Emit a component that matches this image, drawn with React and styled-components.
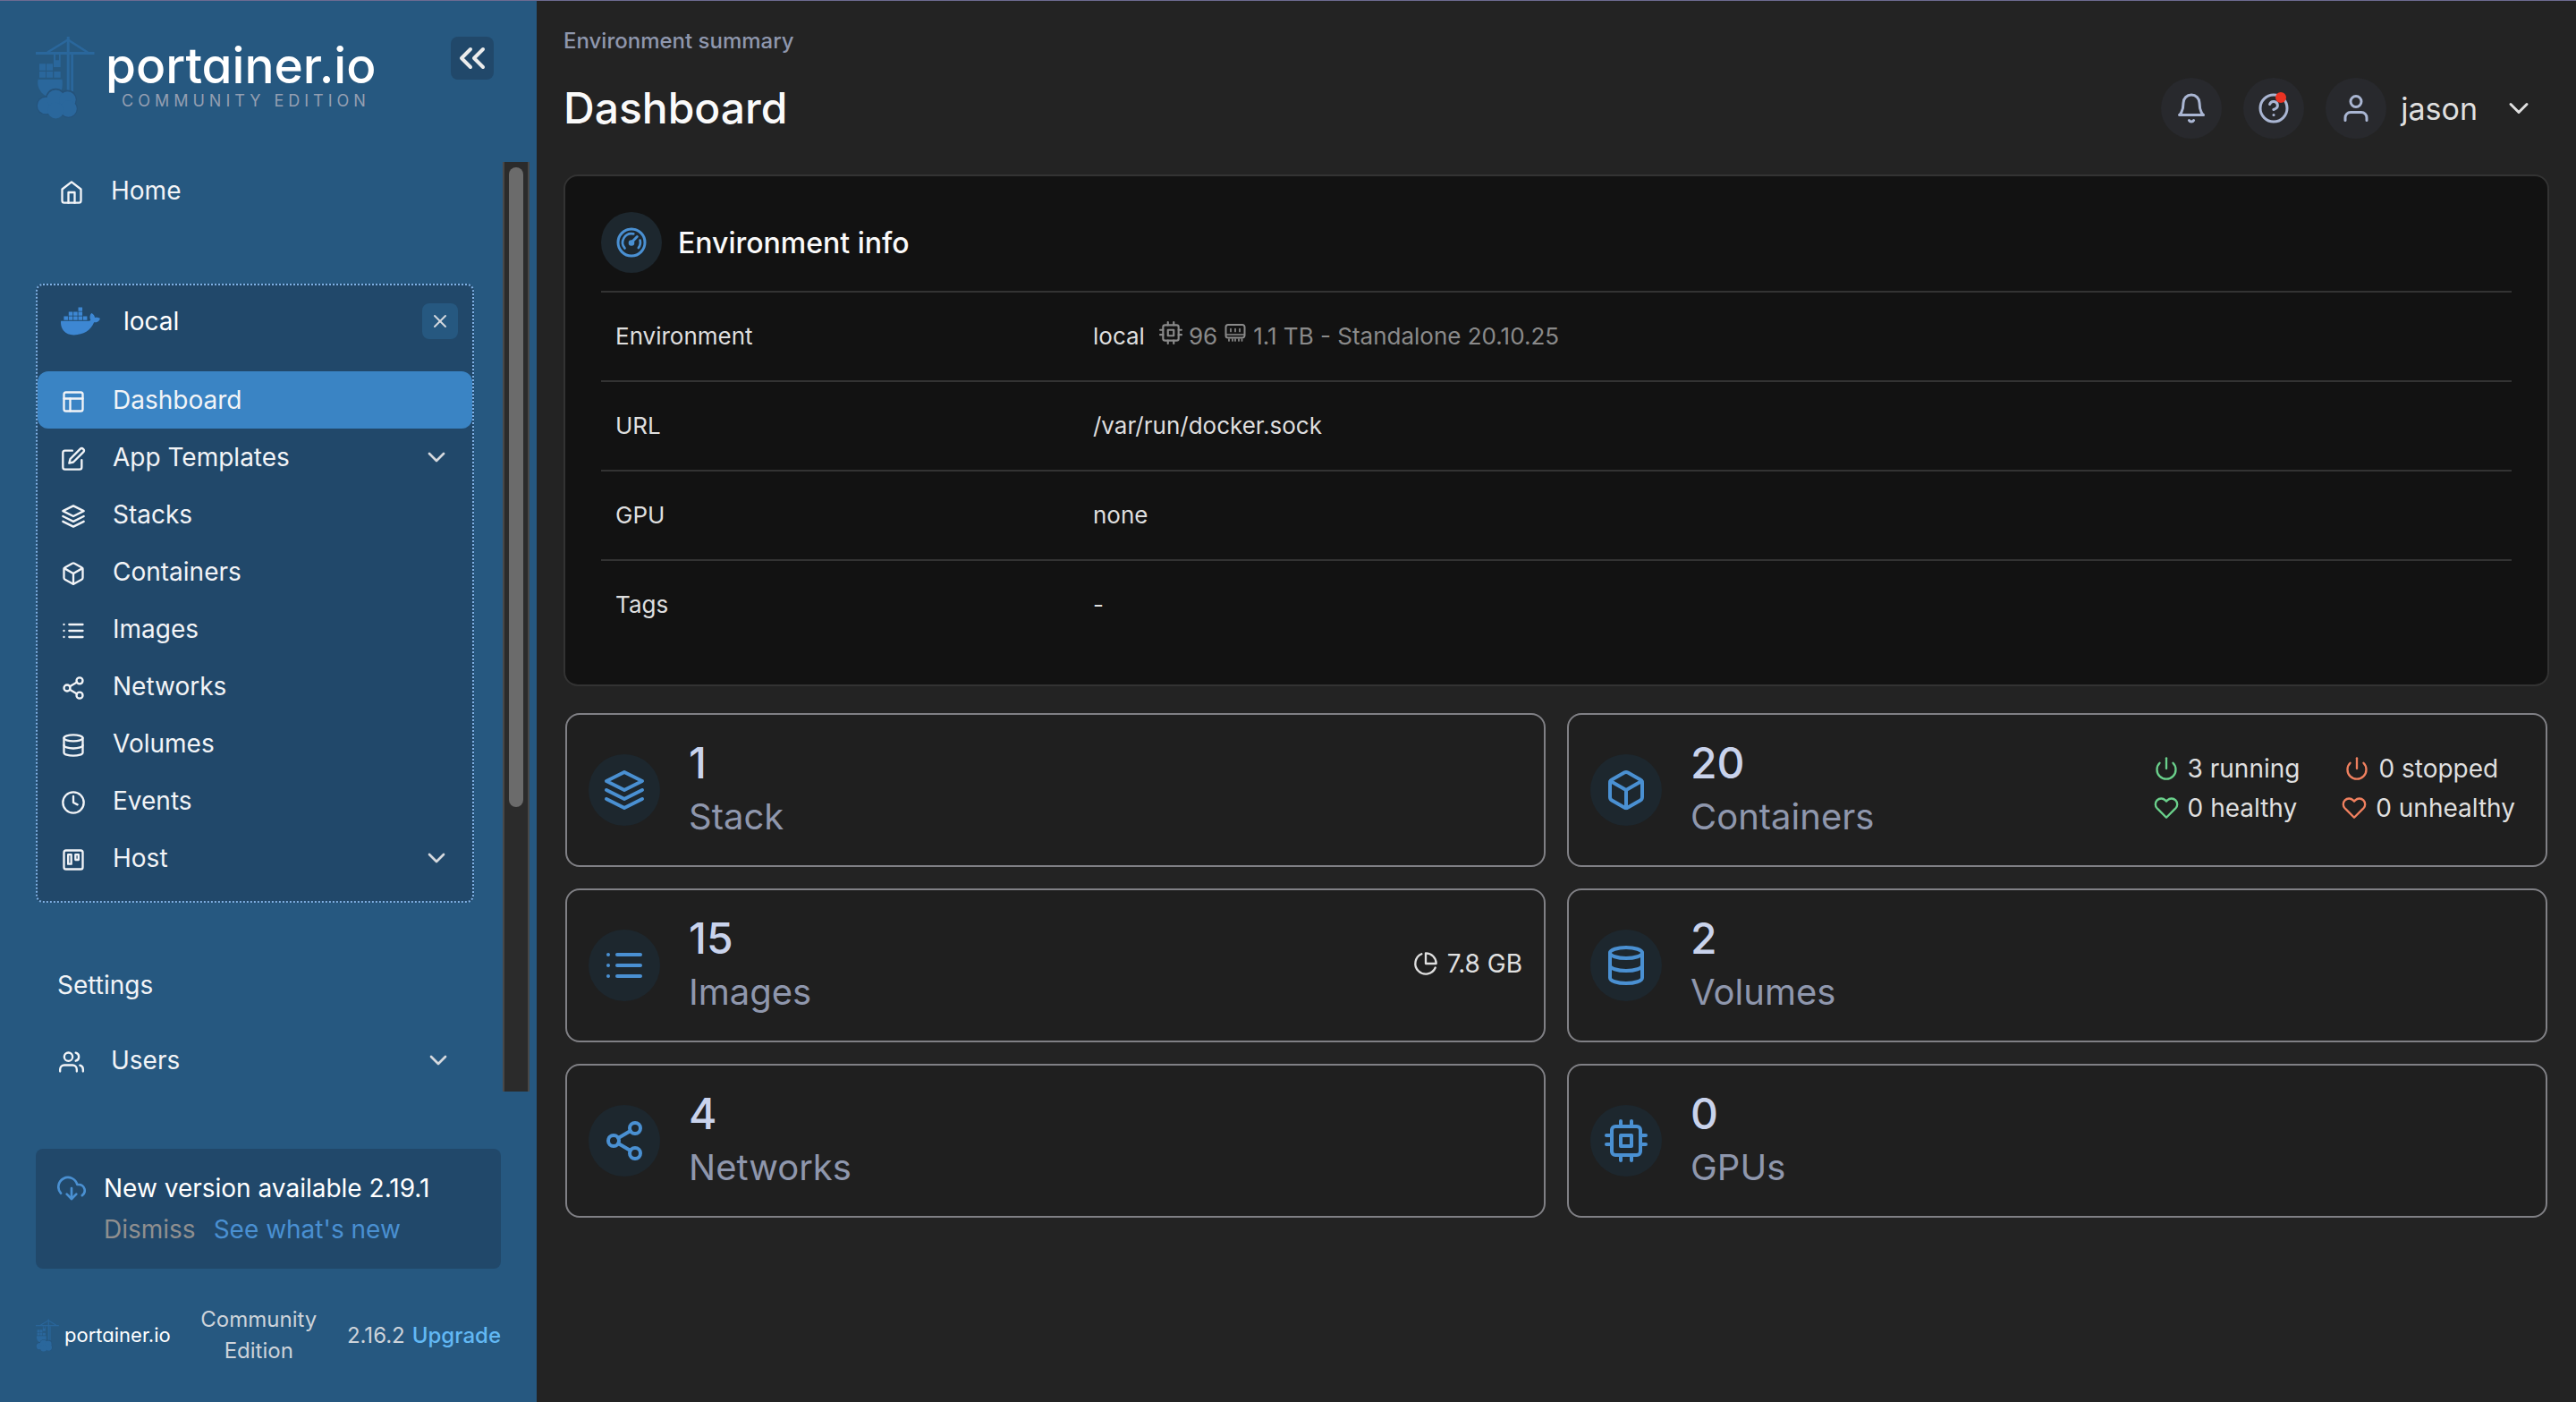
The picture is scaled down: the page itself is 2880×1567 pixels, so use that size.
import React from "react";
import styled, { createGlobalStyle } from "styled-components";
import {
  FiBell, FiBox, FiChevronDown, FiChevronsLeft, FiClock, FiCpu, FiDatabase,
  FiDownloadCloud, FiEdit, FiHeart, FiHelpCircle, FiHome, FiLayers, FiLayout,
  FiList, FiPieChart, FiPower, FiShare2, FiTrello, FiUser, FiUsers, FiX,
} from "react-icons/fi";
import { FaDocker } from "react-icons/fa";

const color = {
  sidebar: "#265880",
  sidebarDeep: "#21486a",
  active: "#3a84c4",
  accent: "#4a90d2",
  badge: "#1d272e",
  page: "#232323",
  card: "#121212",
  tile: "#1f1f1f",
  line: "#333333",
  muted: "#8f97ad",
  text: "#dfdfdf",
};

const GlobalStyle = createGlobalStyle`
  *, *::before, *::after { box-sizing: border-box; }
  body {
    margin: 0;
    background: ${color.page};
    color: ${color.text};
    font-family: Inter, "Liberation Sans", sans-serif;
    font-size: 28px;
  }
  button { border: 0; padding: 0; background: none; color: inherit; font: inherit; cursor: pointer; }
  a { color: inherit; text-decoration: none; }
  ul { list-style: none; margin: 0; padding: 0; }
  svg { display: block; flex: none; }
`;

const Shell = styled.div`
  display: flex;
  min-height: 100vh;
  border-top: 1px solid #6d6b92;
`;

/* ---------- sidebar ---------- */

const Sidebar = styled.aside`
  display: flex;
  flex-direction: column;
  flex: none;
  width: 600px;
  height: calc(100vh - 1px);
  background: ${color.sidebar};
`;

const SidebarHeader = styled.header`
  display: flex;
  justify-content: space-between;
  align-items: flex-start;
  padding: 40px 48px 48px 40px;
`;

const Brand = styled.a`
  display: flex;
  align-items: ${(p) => (p.$small ? "center" : "flex-start")};
  gap: ${(p) => (p.$small ? 6 : 12)}px;
  color: #ffffff;
`;

const BrandText = styled.span`
  display: flex;
  flex-direction: column;
  padding-top: 2px;
`;

const BrandName = styled.span`
  font-size: ${(p) => (p.$small ? 22 : 55)}px;
  line-height: ${(p) => (p.$small ? 32 : 60)}px;
  font-weight: ${(p) => (p.$small ? 400 : 500)};
  font-feature-settings: "cv11";
`;

const BrandEdition = styled.span`
  padding-left: 18px;
  font-size: 18px;
  line-height: 20px;
  letter-spacing: 5px;
  color: #949fb2;
`;

const CollapseButton = styled.button`
  width: 48px;
  height: 48px;
  border-radius: 8px;
  background: ${color.sidebarDeep};
  color: #ececec;
`;

const ScrollArea = styled.div`
  display: flex;
  flex: 1;
  min-height: 0;
  overflow: hidden;
  padding: 0 8px 0 40px;
`;

const Nav = styled.nav`
  flex: 1;
  margin-right: 32px;
`;

const ScrollTrack = styled.div`
  display: flex;
  justify-content: center;
  width: 30px;
  padding: 6px 0 12px;
  border: solid #484848;
  border-width: 0 2px;
  background: #2b2b2b;
`;

const ScrollThumb = styled.div`
  width: 16px;
  height: 70%;
  border-radius: 8px;
  background: #6b6b6b;
`;

const NavLink = styled.a`
  display: flex;
  align-items: center;
  gap: 30px;
  height: 64px;
  padding: 0 24px 0 26px;
  border-radius: 12px;
  background: ${(p) => (p.$active ? color.active : "transparent")};
  color: #f2f4f7;
`;

const NavIcon = styled.span`
  margin-top: 4px;
  font-size: 28px;
`;

const NavLabel = styled.span`
  flex: 1;
`;

const NavChevron = styled(FiChevronDown)`
  font-size: 32px;
  color: #d5d9de;
`;

const EnvironmentGroup = styled.section`
  margin: 72px 0 60px;
  padding-bottom: 16px;
  border: 2px dotted #7fb0e4;
  border-radius: 8px;
  background: ${color.sidebarDeep};
`;

const EnvironmentHeader = styled.div`
  display: flex;
  align-items: center;
  gap: 26px;
  padding: 18px 16px 34px 26px;
  color: #ffffff;
`;

const EnvironmentName = styled.span`
  flex: 1;
`;

const CloseButton = styled.button`
  display: grid;
  place-items: center;
  width: 40px;
  height: 40px;
  border-radius: 8px;
  background: ${color.sidebar};
  color: #d5d9de;
  font-size: 24px;
`;

const SectionTitle = styled.h2`
  margin: 0 0 20px;
  padding-left: 24px;
  font-size: 28px;
  line-height: 64px;
  font-weight: 400;
  color: #f2f4f7;
`;

const UpdateNotice = styled.section`
  display: flex;
  gap: 20px;
  margin: 64px 40px 0;
  padding: 21px 24px;
  border-radius: 8px;
  background: ${color.sidebarDeep};
  line-height: 46px;
  color: #ffffff;
`;

const UpdateIcon = styled(FiDownloadCloud)`
  margin-top: 7px;
  font-size: 32px;
  color: ${color.accent};
`;

const UpdateActions = styled.div`
  display: flex;
  gap: 20px;
  color: #8f8f8f;

  a { color: ${color.accent}; }
`;

const SidebarFooter = styled.footer`
  display: flex;
  align-items: center;
  justify-content: space-between;
  padding: 39px 40px 40px;
  font-size: 24px;
  line-height: 35px;
  color: #cdd3da;
`;

const Edition = styled.span`
  width: 132px;
  text-align: center;
`;

const Version = styled.span`
  display: flex;
  gap: 8px;

  a { color: #62b8f4; font-weight: 500; }
`;

/* ---------- main ---------- */

const Main = styled.main`
  flex: 1;
  min-width: 0;
  padding: 28px 30px;
`;

const Breadcrumb = styled.div`
  font-size: 24px;
  line-height: 34px;
  font-weight: 500;
  color: ${color.muted};
`;

const TitleBar = styled.header`
  display: flex;
  align-items: center;
  justify-content: space-between;
  margin: 24px 0 40px;
`;

const PageTitle = styled.h1`
  margin: 0;
  font-size: 48px;
  line-height: 68px;
  font-weight: 500;
  color: #fafafa;
`;

const HeaderActions = styled.div`
  display: flex;
  align-items: center;
  gap: 24px;
  padding-right: 16px;
`;

const RoundButton = styled.button`
  position: relative;
  display: grid;
  place-items: center;
  width: 68px;
  height: 68px;
  border-radius: 50%;
  background: #28292d;
  color: #aab6d3;
  font-size: 36px;
`;

const AlertDot = styled.span`
  position: absolute;
  top: 16px;
  right: 20px;
  width: 12px;
  height: 12px;
  border-radius: 50%;
  background: #eb3323;
`;

const UserMenu = styled.button`
  display: flex;
  align-items: center;
  gap: 16px;
  font-size: 34px;
`;

const UserBadge = styled(RoundButton).attrs({ as: "span" })``;

const UserName = styled.span`
  margin-right: 12px;
`;

const InfoCard = styled.section`
  padding: 40px;
  border: 2px solid ${color.line};
  border-radius: 16px;
  background: ${color.card};
`;

const InfoHeader = styled.div`
  display: flex;
  align-items: center;
  gap: 18px;
  margin-bottom: 20px;
`;

const IconBadge = styled.span`
  display: grid;
  place-items: center;
  flex: none;
  width: ${(p) => p.$size}px;
  height: ${(p) => p.$size}px;
  border-radius: 50%;
  background: ${color.badge};
  color: ${color.accent};
  font-size: ${(p) => p.$icon}px;
`;

const InfoTitle = styled.h2`
  margin: 0;
  font-size: 32px;
  font-weight: 500;
  color: #fafafa;
`;

const InfoTable = styled.table`
  width: 100%;
  border-collapse: separate;
  border-spacing: 0;
  table-layout: fixed;
  font-size: 26px;

  th, td {
    height: 100px;
    padding: 0 16px 2px;
    border-top: 2px solid ${color.line};
    text-align: left;
    font-weight: 400;
  }
  th { width: 25%; }
`;

const EnvironmentValue = styled.div`
  display: flex;
  align-items: center;
  gap: 16px;
`;

const Specs = styled.span`
  display: flex;
  align-items: center;
  gap: 7px;
  color: #8a8a8a;

  svg { margin-bottom: 6px; }
`;

const TileGrid = styled.div`
  display: grid;
  grid-template-columns: 1fr 1fr;
  gap: 24px;
  margin-top: 30px;
  padding: 0 2px;
`;

const Tile = styled.a`
  display: flex;
  align-items: center;
  gap: 32px;
  height: 172px;
  padding: 0 24px;
  border: 2px solid #808085;
  border-radius: 16px;
  background: ${color.tile};
`;

const TileText = styled.span`
  flex: 1;
  display: flex;
  flex-direction: column;
  line-height: 60px;
`;

const TileCount = styled.strong`
  font-size: 48px;
  font-weight: 500;
  color: #c9d3ec;
`;

const TileLabel = styled.span`
  font-size: 40px;
  color: ${color.muted};
`;

const StatList = styled.span`
  display: flex;
  flex-direction: column;
  margin-bottom: 4px;
  line-height: 44px;
`;

const StatRow = styled.span`
  display: flex;
  gap: 50px;
  padding-right: ${(p) => (p.$inset ? 10 : 0)}px;
`;

const Stat = styled.span`
  display: flex;
  align-items: center;
  gap: 10px;

  svg { color: ${(p) => p.$tone || "inherit"}; }
`;

/* ---------- drawings ---------- */

function Crane({ width, height }) {
  return (
    <svg width={width} height={height} viewBox="0 0 66 92" aria-hidden="true">
      <g fill="#2a679c">
        <path d="M0 17h65.500v3H0z" />
        <path d="M34.700 0h3v61h-3zM39.300 20H42v41h-2.700z" />
        <path d="M20 20h7.700v14H20zM22 20v6.300h4V20z" fillRule="evenodd" />
        <path d="M4 30.300h7v7.500H4zM12 30.300h7v7.500h-7zM4 39h7v6.800H4zM12 39h7v6.800h-7zM20.300 39h7.400v6.800h-7.400z" />
        <path d="M2.500 47.700h27c1 8-.5 15-5 20l-14-2C4.500 62 1 55 2.500 47.700z" />
      </g>
      <path d="M13 17.500L36 3.500l22 14" fill="none" stroke="#2a679c" strokeWidth="2.600" />
      <g fill="#25527a">
        <circle cx="11" cy="77" r="10.200" />
        <circle cx="22.300" cy="69" r="11.200" />
        <circle cx="35.500" cy="70" r="10.400" />
        <circle cx="36.500" cy="80.500" r="10.200" />
      </g>
      <g fill="#2a679c">
        <circle cx="11" cy="77" r="9.200" />
        <circle cx="22.300" cy="69.500" r="10" />
        <circle cx="35.500" cy="70.500" r="9.200" />
        <circle cx="36.500" cy="80.500" r="9.300" />
        <circle cx="22.300" cy="82.500" r="9" />
      </g>
    </svg>
  );
}

function GaugeIcon() {
  return (
    <svg width="36" height="36" viewBox="0 0 24 24" fill="none" stroke="currentColor" strokeWidth="2" strokeLinecap="round" aria-hidden="true">
      <circle cx="12" cy="12" r="10" />
      <path d="M7 16.300A6.600 6.600 0 0 1 13.500 5.600" strokeWidth="1.800" />
      <path d="M18.400 10.400A6.600 6.600 0 0 1 17.200 16" strokeWidth="1.800" />
      <path d="M12 12l4.200-4.300" />
      <circle cx="12" cy="12.300" r="1.200" fill="currentColor" />
    </svg>
  );
}

function MemoryIcon() {
  return (
    <svg width="26" height="26" viewBox="0 0 26 26" fill="none" stroke="currentColor" strokeWidth="2" strokeLinecap="round" aria-hidden="true">
      <path d="M5 4h16a2.500 2.500 0 0 1 2.500 2.500V16a2.500 2.500 0 0 1-2.500 2.500H5A2.500 2.500 0 0 1 2.500 16V6.500A2.500 2.500 0 0 1 5 4z" />
      <path d="M3 15h20M8 8.500v3M13 8.500v3M18 8.500v3M6 20v2M10 20v2M13 20v2M17 20v2M20.500 20v2" strokeWidth="1.700" />
    </svg>
  );
}

/* ---------- data ---------- */

const environmentMenu = [
  { label: "Dashboard", Icon: FiLayout, active: true },
  { label: "App Templates", Icon: FiEdit, expandable: true },
  { label: "Stacks", Icon: FiLayers },
  { label: "Containers", Icon: FiBox },
  { label: "Images", Icon: FiList },
  { label: "Networks", Icon: FiShare2 },
  { label: "Volumes", Icon: FiDatabase },
  { label: "Events", Icon: FiClock },
  { label: "Host", Icon: FiTrello, expandable: true },
];

const GREEN = "#6ad08b";
const ORANGE = "#f0805f";

const tiles = [
  { count: 1, label: "Stack", Icon: FiLayers },
  {
    count: 20,
    label: "Containers",
    Icon: FiBox,
    inset: true,
    stats: [
      [
        { Icon: FiPower, text: "3 running", tone: GREEN },
        { Icon: FiPower, text: "0 stopped", tone: ORANGE },
      ],
      [
        { Icon: FiHeart, text: "0 healthy", tone: GREEN },
        { Icon: FiHeart, text: "0 unhealthy", tone: ORANGE },
      ],
    ],
  },
  { count: 15, label: "Images", Icon: FiList, stats: [[{ Icon: FiPieChart, text: "7.8 GB" }]] },
  { count: 2, label: "Volumes", Icon: FiDatabase },
  { count: 4, label: "Networks", Icon: FiShare2 },
  { count: 0, label: "GPUs", Icon: FiCpu },
];

/* ---------- parts ---------- */

function NavItem({ label, Icon, active, expandable }) {
  return (
    <NavLink href="#" $active={active} aria-current={active ? "page" : undefined}>
      <NavIcon><Icon /></NavIcon>
      <NavLabel>{label}</NavLabel>
      {expandable && <NavChevron />}
    </NavLink>
  );
}

function SummaryTile({ count, label, Icon, stats, inset }) {
  return (
    <Tile href="#">
      <IconBadge $size={80} $icon={48}><Icon /></IconBadge>
      <TileText>
        <TileCount>{count}</TileCount>
        <TileLabel>{label}</TileLabel>
      </TileText>
      {stats && (
        <StatList>
          {stats.map((row, i) => (
            <StatRow key={i} $inset={inset}>
              {row.map(({ Icon: StatIcon, text, tone }) => (
                <Stat key={text} $tone={tone}><StatIcon />{text}</Stat>
              ))}
            </StatRow>
          ))}
        </StatList>
      )}
    </Tile>
  );
}

export default function App() {
  return (
    <>
      <GlobalStyle />
      <Shell>
        <Sidebar>
          <SidebarHeader>
            <Brand href="#">
              <Crane width={66} height={92} />
              <BrandText>
                <BrandName>portainer.io</BrandName>
                <BrandEdition>COMMUNITY EDITION</BrandEdition>
              </BrandText>
            </Brand>
            <CollapseButton aria-label="Collapse sidebar"><FiChevronsLeft size={48} /></CollapseButton>
          </SidebarHeader>

          <ScrollArea>
            <Nav>
              <NavItem label="Home" Icon={FiHome} />
              <EnvironmentGroup>
                <EnvironmentHeader>
                  <FaDocker size={44} color="#3d87d3" />
                  <EnvironmentName>local</EnvironmentName>
                  <CloseButton aria-label="Close environment"><FiX /></CloseButton>
                </EnvironmentHeader>
                <ul>
                  {environmentMenu.map((item) => (
                    <li key={item.label}><NavItem {...item} /></li>
                  ))}
                </ul>
              </EnvironmentGroup>
              <SectionTitle>Settings</SectionTitle>
              <NavItem label="Users" Icon={FiUsers} expandable />
            </Nav>
            <ScrollTrack><ScrollThumb /></ScrollTrack>
          </ScrollArea>

          <UpdateNotice>
            <UpdateIcon />
            <div>
              <div>New version available 2.19.1</div>
              <UpdateActions>
                <button type="button">Dismiss</button>
                <a href="#">See what's new</a>
              </UpdateActions>
            </div>
          </UpdateNotice>

          <SidebarFooter>
            <Brand href="#" $small>
              <Crane width={26} height={37} />
              <BrandName $small>portainer.io</BrandName>
            </Brand>
            <Edition>Community Edition</Edition>
            <Version>2.16.2 <a href="#">Upgrade</a></Version>
          </SidebarFooter>
        </Sidebar>

        <Main>
          <Breadcrumb>Environment summary</Breadcrumb>
          <TitleBar>
            <PageTitle>Dashboard</PageTitle>
            <HeaderActions>
              <RoundButton aria-label="Notifications"><FiBell /></RoundButton>
              <RoundButton aria-label="Help"><FiHelpCircle /><AlertDot /></RoundButton>
              <UserMenu>
                <UserBadge><FiUser /></UserBadge>
                <UserName>jason</UserName>
                <FiChevronDown size={36} />
              </UserMenu>
            </HeaderActions>
          </TitleBar>

          <InfoCard>
            <InfoHeader>
              <IconBadge $size={68} $icon={36}><GaugeIcon /></IconBadge>
              <InfoTitle>Environment info</InfoTitle>
            </InfoHeader>
            <InfoTable>
              <tbody>
                <tr>
                  <th scope="row">Environment</th>
                  <td>
                    <EnvironmentValue>
                      local
                      <Specs>
                        <FiCpu /> 96 <MemoryIcon /> 1.1 TB - Standalone 20.10.25
                      </Specs>
                    </EnvironmentValue>
                  </td>
                </tr>
                <tr><th scope="row">URL</th><td>/var/run/docker.sock</td></tr>
                <tr><th scope="row">GPU</th><td>none</td></tr>
                <tr><th scope="row">Tags</th><td>-</td></tr>
              </tbody>
            </InfoTable>
          </InfoCard>

          <TileGrid>
            {tiles.map((tile) => <SummaryTile key={tile.label} {...tile} />)}
          </TileGrid>
        </Main>
      </Shell>
    </>
  );
}
